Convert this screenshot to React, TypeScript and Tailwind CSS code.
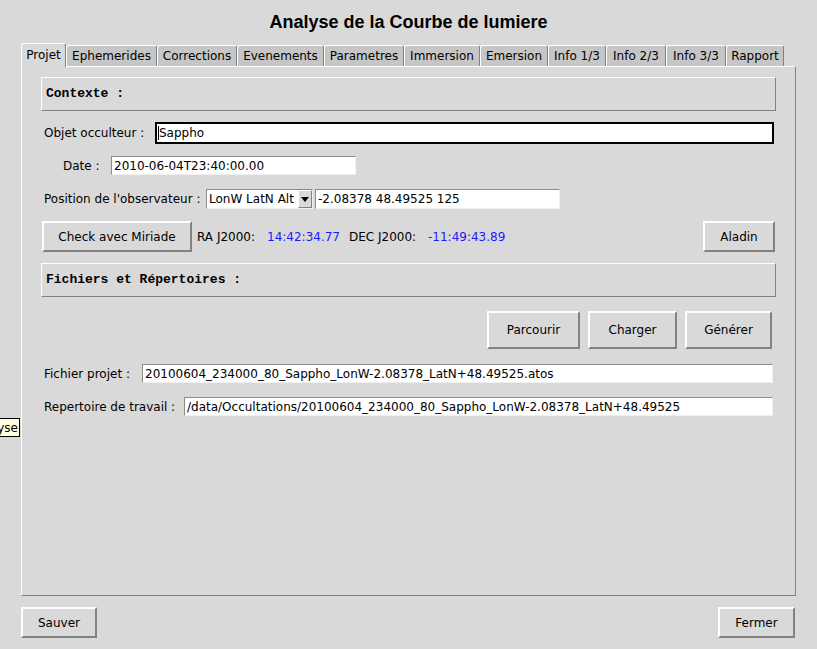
import React from 'react';

const tabs = [
  { label: 'Projet', w: 'w-[45px]', active: true },
  { label: 'Ephemerides', w: 'w-[91px]' },
  { label: 'Corrections', w: 'w-[80px]' },
  { label: 'Evenements', w: 'w-[87px]' },
  { label: 'Parametres', w: 'w-[80px]' },
  { label: 'Immersion', w: 'w-[76px]' },
  { label: 'Emersion', w: 'w-[68px]' },
  { label: 'Info 1/3', w: 'w-[58px]' },
  { label: 'Info 2/3', w: 'w-[60px]' },
  { label: 'Info 3/3', w: 'w-[60px]' },
  { label: 'Rapport', w: 'w-[58px]' },
];

const raised = 'border-2 border-t-white border-l-white border-r-[#828282] border-b-[#828282]';
const sunken = 'border border-t-[#8c8c8c] border-l-[#8c8c8c] border-r-[#f0f0f0] border-b-[#f0f0f0]';

const TkButton = ({ label, className }: { label: string; className: string }) => (
  <div className={`flex items-center justify-center bg-[#d9d9d9] ${raised} ${className}`}>{label}</div>
);

const Field = ({ value, className }: { value: string; className: string }) => (
  <div className={`flex items-center bg-white pl-[2px] whitespace-nowrap overflow-hidden ${sunken} ${className}`}>{value}</div>
);

const Section = ({ title }: { title: string }) => (
  <div className="h-[34px] flex items-center pl-[4px] border border-t-white border-l-white border-r-[#828282] border-b-[#828282] font-['Liberation_Mono',monospace] font-bold text-[13px]">
    {title}
  </div>
);

const App: React.FC = () => {
  return (
    <div className="relative w-[817px] h-[649px] overflow-hidden bg-[#d9d9d9] text-black font-['DejaVu_Sans',sans-serif] text-[12px] flex flex-col">
      <div className="h-[43px] flex items-center justify-center pt-[1px] font-['Liberation_Sans',Arial,sans-serif] font-bold text-[18px]">
        Analyse de la Courbe de lumiere
      </div>

      <div className="h-[23px] px-[21px] flex items-end">
        {tabs.map((t) =>
          t.active ? (
            <div
              key={t.label}
              className={`${t.w} h-[24px] -mb-[1px] pb-[2px] relative z-10 flex items-center justify-center bg-[#d9d9d9] border-t border-l border-t-white border-l-white border-r border-r-[#828282] rounded-t-[3px]`}
            >
              {t.label}
            </div>
          ) : (
            <div
              key={t.label}
              className={`${t.w} h-[21px] pb-[1px] flex items-center justify-center bg-[#c6c6c6] border-t border-l border-t-white border-l-white border-r border-r-[#828282] rounded-t-[3px]`}
            >
              {t.label}
            </div>
          )
        )}
      </div>

      <div className="mx-[21px] h-[530px] border border-t-white border-l-white border-r-[#828282] border-b-[#828282] px-[19px] flex flex-col">
        <div className="mt-[10px]">
          <Section title="Contexte :" />
        </div>

        <div className="mt-[11px] h-[22px] flex items-center">
          <span className="w-[114px] pl-[3px]">Objet occulteur :</span>
          <div className="w-[619px] h-[22px] flex items-center bg-white border-2 border-black pl-[1px]">
            <span className="w-px h-[14px] bg-black" />
            <span>Sappho</span>
          </div>
        </div>

        <div className="mt-[12px] h-[19px] flex items-center">
          <span className="w-[70px] pl-[22px]">Date :</span>
          <Field value="2010-06-04T23:40:00.00" className="w-[245px] h-[19px]" />
        </div>

        <div className="mt-[14px] h-[20px] flex items-center">
          <span className="w-[165px] pl-[3px] whitespace-nowrap">Position de l'observateur :</span>
          <div className={`w-[107px] h-[20px] flex items-center bg-white ${sunken}`}>
            <span className="flex-1 pl-[2px] whitespace-nowrap">LonW LatN Alt</span>
            <div className="w-[14px] h-[18px] flex items-center justify-center bg-[#d9d9d9] border border-t-white border-l-white border-r-[#828282] border-b-[#828282]">
              <svg width="8" height="5" viewBox="0 0 8 5">
                <path d="M0 0 L8 0 L4 5 Z" fill="#000" />
              </svg>
            </div>
          </div>
          <Field value="-2.08378 48.49525 125" className="ml-[2px] w-[245px] h-[20px]" />
        </div>

        <div className="mt-[12px] h-[31px] flex items-center">
          <TkButton label="Check avec Miriade" className="ml-[1px] w-[150px] h-[31px]" />
          <span className="ml-[5px] w-[70px]">RA J2000:</span>
          <span className="w-[82px] text-[#1a1aff]">14:42:34.77</span>
          <span className="w-[79px]">DEC J2000:</span>
          <span className="text-[#1a1aff]">-11:49:43.89</span>
          <TkButton label="Aladin" className="ml-auto mr-[1px] w-[72px] h-[31px]" />
        </div>

        <div className="mt-[11px]">
          <Section title="Fichiers et Répertoires :" />
        </div>

        <div className="mt-[14px] h-[38px] flex items-center justify-end gap-[8px] pr-[4px]">
          <TkButton label="Parcourir" className="w-[93px] h-[38px]" />
          <TkButton label="Charger" className="w-[89px] h-[38px]" />
          <TkButton label="Générer" className="w-[87px] h-[38px]" />
        </div>

        <div className="mt-[15px] h-[19px] flex items-center">
          <span className="w-[101px] pl-[3px]">Fichier projet :</span>
          <Field value="20100604_234000_80_Sappho_LonW-2.08378_LatN+48.49525.atos" className="w-[631px] h-[19px]" />
        </div>

        <div className="mt-[14px] h-[19px] flex items-center">
          <span className="w-[143px] pl-[3px]">Repertoire de travail :</span>
          <Field value="/data/Occultations/20100604_234000_80_Sappho_LonW-2.08378_LatN+48.49525" className="w-[589px] h-[19px]" />
        </div>
      </div>

      <div className="mt-[11px] h-[31px] pl-[21px] pr-[22px] flex items-center justify-between">
        <TkButton label="Sauver" className="w-[76px] h-[31px]" />
        <TkButton label="Fermer" className="w-[77px] h-[31px]" />
      </div>

      <div className="absolute left-0 top-[418px] w-[20px] h-[19px] overflow-hidden flex items-center justify-end bg-[#ffffe0] border border-black border-l-0 pr-[1px]">
        <span className="whitespace-nowrap">Analyse</span>
      </div>
    </div>
  );
};

export default App;
